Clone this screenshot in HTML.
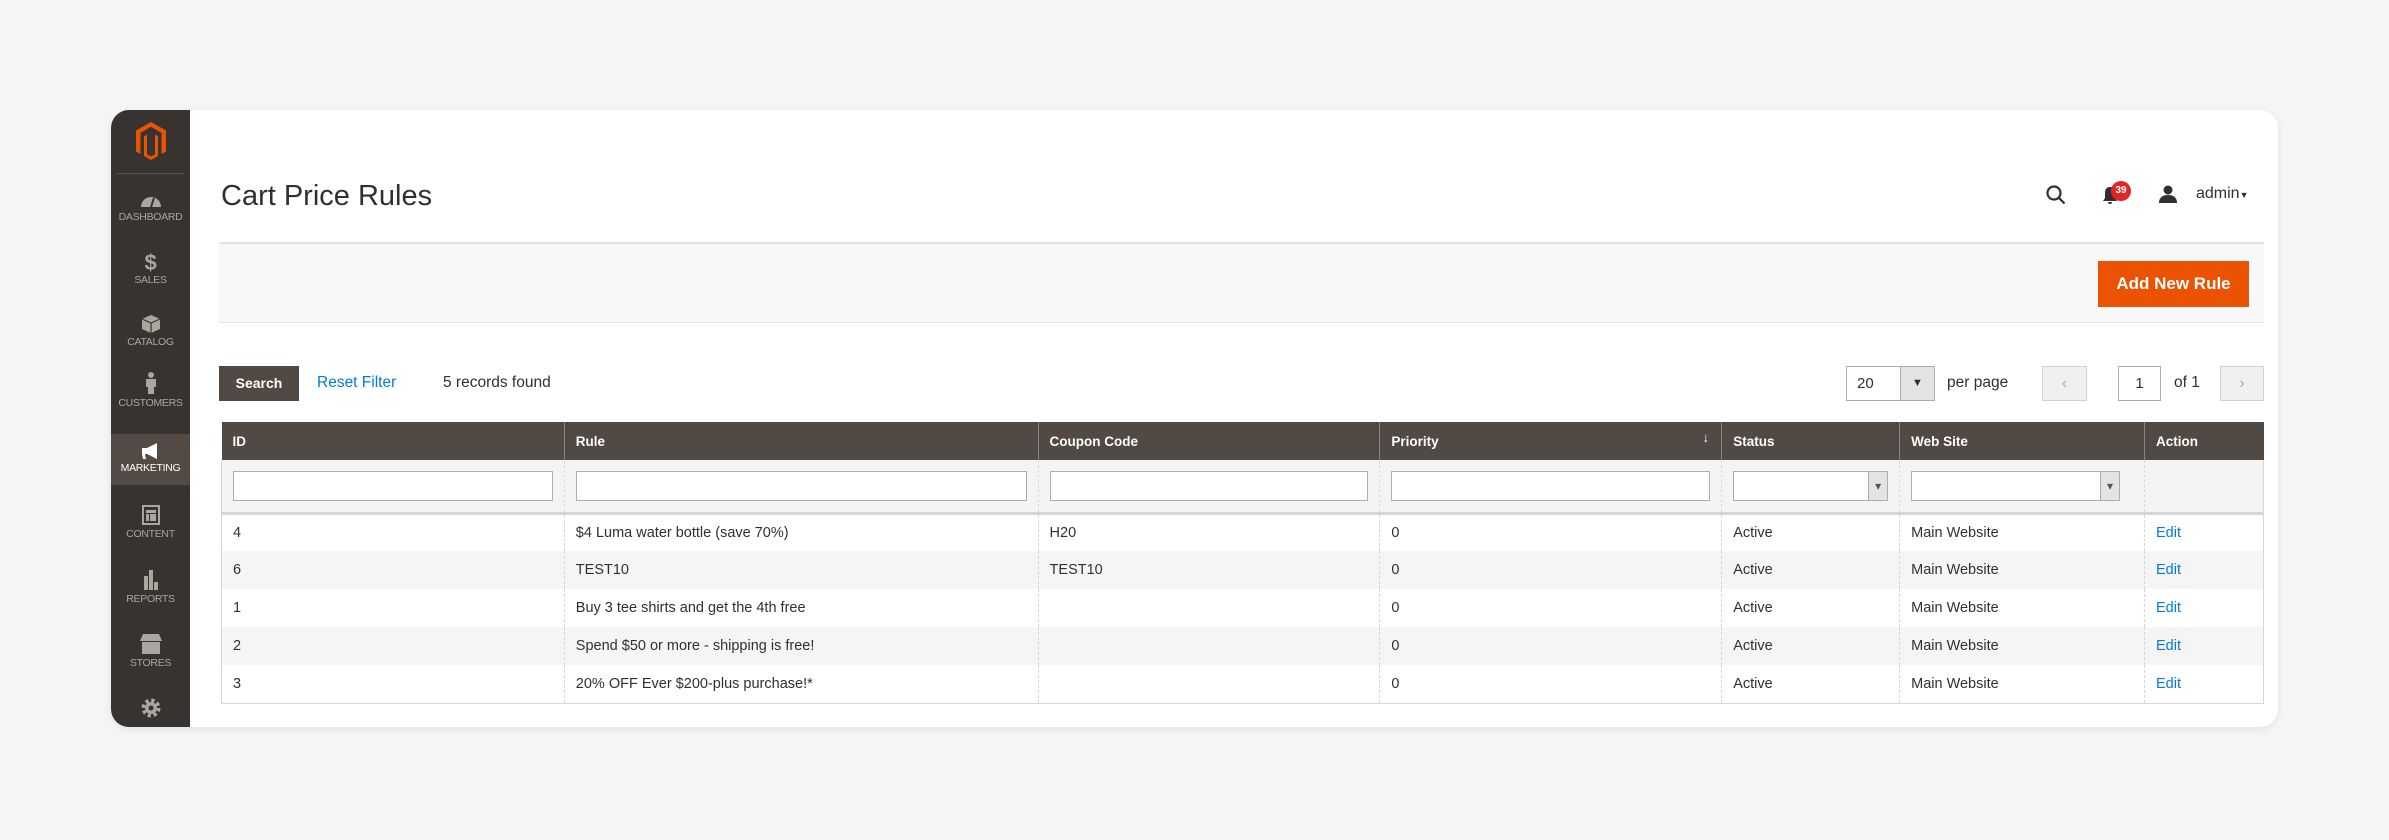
<!DOCTYPE html>
<html><head><meta charset="utf-8"><style>
*{box-sizing:border-box;margin:0;padding:0}
body{width:2389px;height:840px;background:#f5f5f5;font-family:"Liberation Sans",sans-serif;color:#303030;position:relative;overflow:hidden}
.card{position:absolute;left:111px;top:110px;width:2167px;height:617px;background:#fff;border-radius:18px;box-shadow:0 2px 8px rgba(0,0,0,.08);overflow:hidden}
.side{position:absolute;left:0;top:0;width:79px;height:617px;background:#373330}
.ab{position:absolute}
.nav{position:absolute;left:0;width:79px;text-align:center;color:#aaa6a0;font-size:10.5px;letter-spacing:-.3px}
.nav svg{display:block;margin:0 auto 3px}
table{position:absolute;left:110px;top:312px;width:2043px;border-collapse:collapse;font-size:14.5px}
th{background:#514943;color:#fff;text-align:left;font-weight:bold;height:38px;padding-left:11px;border-left:1px solid #8a837f;font-size:13.5px}
th:first-child{border-left:none}
td{height:38px;padding-left:11px;border-left:1px dashed #d6d6d6;border-bottom:none}
td:first-child{border-left:1px solid #d6d6d6}td:last-child{border-right:1px solid #d6d6d6}
tr.f td{background:#f4f4f4;height:53px;border-bottom:3px solid #d6d6d6;position:relative}
tr.alt td{background:#f5f5f5}
tr:last-child td{border-bottom:1px solid #d6d6d6}
.fi{display:block;height:30px;border:1px solid #adadad;background:#fff;margin-right:11px;position:relative}
.sel::after{content:"▾";position:absolute;right:0;top:0;width:18px;height:28px;background:#e3e3e3;border-left:1px solid #adadad;font-size:12px;text-align:center;line-height:28px;color:#555}
a{color:#007bdb;text-decoration:none}
</style></head><body>
<div class="card">
 <div class="side">
  <svg class="ab" style="left:25px;top:12px" width="30" height="38" viewBox="0 0 30 38"><path d="M15 0L0 8.5v21l4.5 2.6V10.9L15 4.8l10.5 6.1v21.2l4.5-2.6v-21z M15 34.5l-4-2.3V12.5l-3 1.7v19.8L15 38l7-4V14.2l-3-1.7v19.7z" fill="#eb5202"/></svg>
  <div class="ab" style="left:6px;top:63px;width:67px;height:1px;background:#5c5652"></div>
  <div class="nav" style="top:82px"><svg width="22" height="16" viewBox="0 0 22 16"><path d="M1 15A10 10 0 0 1 21 15z" fill="#aaa6a0"/><path d="M11 15L14 6" stroke="#373330" stroke-width="2"/></svg>DASHBOARD</div>
  <div class="nav" style="top:142px"><div style="font-size:22px;font-weight:bold;line-height:22px">$</div>SALES</div>
  <div class="nav" style="top:205px"><svg width="18" height="18" viewBox="0 0 18 18"><path d="M9 0L18 4v10l-9 4-9-4V4z" fill="#aaa6a0"/><path d="M0 4l9 4 9-4M9 8v10" stroke="#373330" stroke-width="1.2" fill="none"/></svg>CATALOG</div>
  <div class="nav" style="top:262px"><svg width="12" height="22" viewBox="0 0 12 22"><circle cx="6" cy="3" r="3" fill="#aaa6a0"/><path d="M1 7h10v8H9v7H3v-7H1z" fill="#aaa6a0"/></svg>CUSTOMERS</div>
  <div class="ab" style="left:0;top:324px;width:79px;height:51px;background:#524a45"></div>
  <div class="nav" style="top:333px;color:#fff"><svg width="22" height="16" viewBox="0 0 22 16"><path d="M2 5h5l10-5v16L7 11H5l1 5H3l-1-5z" fill="#fff"/></svg>MARKETING</div>
  <div class="nav" style="top:395px"><svg width="18" height="20" viewBox="0 0 18 20"><rect x="1" y="1" width="16" height="18" fill="none" stroke="#aaa6a0" stroke-width="2"/><rect x="4" y="5" width="10" height="3" fill="#aaa6a0"/><rect x="4" y="9" width="3" height="7" fill="#aaa6a0"/><rect x="8" y="9" width="6" height="7" fill="#aaa6a0"/></svg>CONTENT</div>
  <div class="nav" style="top:460px"><svg width="18" height="20" viewBox="0 0 18 20"><rect x="2" y="6" width="4" height="14" fill="#aaa6a0"/><rect x="7" y="0" width="4" height="20" fill="#aaa6a0"/><rect x="12" y="12" width="4" height="8" fill="#aaa6a0"/></svg>REPORTS</div>
  <div class="nav" style="top:524px"><svg width="22" height="20" viewBox="0 0 22 20"><path d="M3 0h16l3 7H0z" fill="#aaa6a0"/><rect x="2" y="8" width="18" height="12" fill="#aaa6a0"/></svg>STORES</div>
  <div class="nav" style="top:587px"><svg width="22" height="22" viewBox="0 0 22 22"><circle cx="11" cy="11" r="7" fill="none" stroke="#aaa6a0" stroke-width="5" stroke-dasharray="3 2.5"/><circle cx="11" cy="11" r="6" fill="#aaa6a0"/><circle cx="11" cy="11" r="2.5" fill="#373330"/></svg></div>
 </div>
 <div class="ab" style="left:110px;top:70px;font-size:29px;color:#303030">Cart Price Rules</div>
 <svg class="ab" style="left:1934px;top:74px" width="22" height="22" viewBox="0 0 22 22"><circle cx="9" cy="9" r="6.5" fill="none" stroke="#303030" stroke-width="2.2"/><path d="M14 14l5.5 5.5" stroke="#303030" stroke-width="2.2"/></svg>
 <svg class="ab" style="left:1991px;top:76px" width="16" height="18" viewBox="0 0 16 18"><path d="M8 1c-4 0-5 3-5 6v5l-2 3h14l-2-3V7c0-3-1-6-5-6z M6 16h4a2 2 0 0 1-4 0" fill="#303030"/></svg>
 <div class="ab" style="left:2000px;top:71px;width:20px;height:20px;border-radius:10px;background:#e22626;color:#fff;font-size:10px;font-weight:bold;text-align:center;line-height:20px">39</div>
 <svg class="ab" style="left:2048px;top:75px" width="18" height="18" viewBox="0 0 18 18"><circle cx="9" cy="5" r="4.5" fill="#303030"/><path d="M0 18c0-6 4-8 9-8s9 2 9 8z" fill="#303030"/></svg>
 <div class="ab" style="left:2085px;top:75px;font-size:16px;color:#303030">admin<span style="font-size:9px">▼</span></div>
 <div class="ab" style="left:108px;top:132px;width:2045px;height:81px;background:#f8f8f8;border-top:2px solid #e3e3e3;border-bottom:1px solid #e3e3e3"></div>
 <div class="ab" style="left:1987px;top:151px;width:151px;height:46px;background:#eb5202;color:#fff;font-weight:bold;font-size:17px;text-align:center;line-height:46px">Add New Rule</div>
 <div class="ab" style="left:108px;top:256px;width:80px;height:35px;background:#514943;color:#fff;font-weight:bold;font-size:14px;text-align:center;line-height:35px">Search</div>
 <div class="ab" style="left:206px;top:264px;font-size:15.5px;color:#007bdb">Reset Filter</div>
 <div class="ab" style="left:332px;top:264px;font-size:15.5px">5 records found</div>
 <div class="ab" style="left:1735px;top:256px;width:89px;height:35px;border:1px solid #adadad;background:#fff;font-size:15px;line-height:33px;padding-left:10px">20<div class="ab" style="right:0;top:0;width:34px;height:33px;background:#e3e3e3;border-left:1px solid #adadad;text-align:center;font-size:11px">▼</div></div>
 <div class="ab" style="left:1836px;top:264px;font-size:15.5px">per page</div>
 <div class="ab" style="left:1931px;top:256px;width:45px;height:35px;border:1px solid #d1d1d1;background:#f0f0f0;color:#aaa;text-align:center;line-height:33px;font-size:16px">‹</div>
 <div class="ab" style="left:2007px;top:256px;width:43px;height:35px;border:1px solid #adadad;background:#fff;text-align:center;line-height:33px;font-size:15px">1</div>
 <div class="ab" style="left:2063px;top:264px;font-size:15.5px">of 1</div>
 <div class="ab" style="left:2109px;top:256px;width:44px;height:35px;border:1px solid #d1d1d1;background:#f0f0f0;color:#aaa;text-align:center;line-height:33px;font-size:16px">›</div>
 <table>
  <colgroup><col style="width:343px"><col style="width:474px"><col style="width:342px"><col style="width:342px"><col style="width:178px"><col style="width:245px"><col style="width:119px"></colgroup>
  <tr><th>ID</th><th>Rule</th><th>Coupon Code</th><th style="position:relative">Priority<span style="position:absolute;right:12px;top:8px;font-weight:normal">↓</span></th><th>Status</th><th>Web Site</th><th>Action</th></tr>
  <tr class="f"><td><span class="fi"></span></td><td><span class="fi"></span></td><td><span class="fi"></span></td><td><span class="fi"></span></td><td><span class="fi sel"></span></td><td><span class="fi sel" style="margin-right:24px"></span></td><td></td></tr>
  <tr><td>4</td><td>$4 Luma water bottle (save 70%)</td><td>H20</td><td>0</td><td>Active</td><td>Main Website</td><td><a>Edit</a></td></tr>
  <tr class="alt"><td>6</td><td>TEST10</td><td>TEST10</td><td>0</td><td>Active</td><td>Main Website</td><td><a>Edit</a></td></tr>
  <tr><td>1</td><td>Buy 3 tee shirts and get the 4th free</td><td></td><td>0</td><td>Active</td><td>Main Website</td><td><a>Edit</a></td></tr>
  <tr class="alt"><td>2</td><td>Spend $50 or more - shipping is free!</td><td></td><td>0</td><td>Active</td><td>Main Website</td><td><a>Edit</a></td></tr>
  <tr><td>3</td><td>20% OFF Ever $200-plus purchase!*</td><td></td><td>0</td><td>Active</td><td>Main Website</td><td><a>Edit</a></td></tr>
 </table>
</div>
</body></html>
